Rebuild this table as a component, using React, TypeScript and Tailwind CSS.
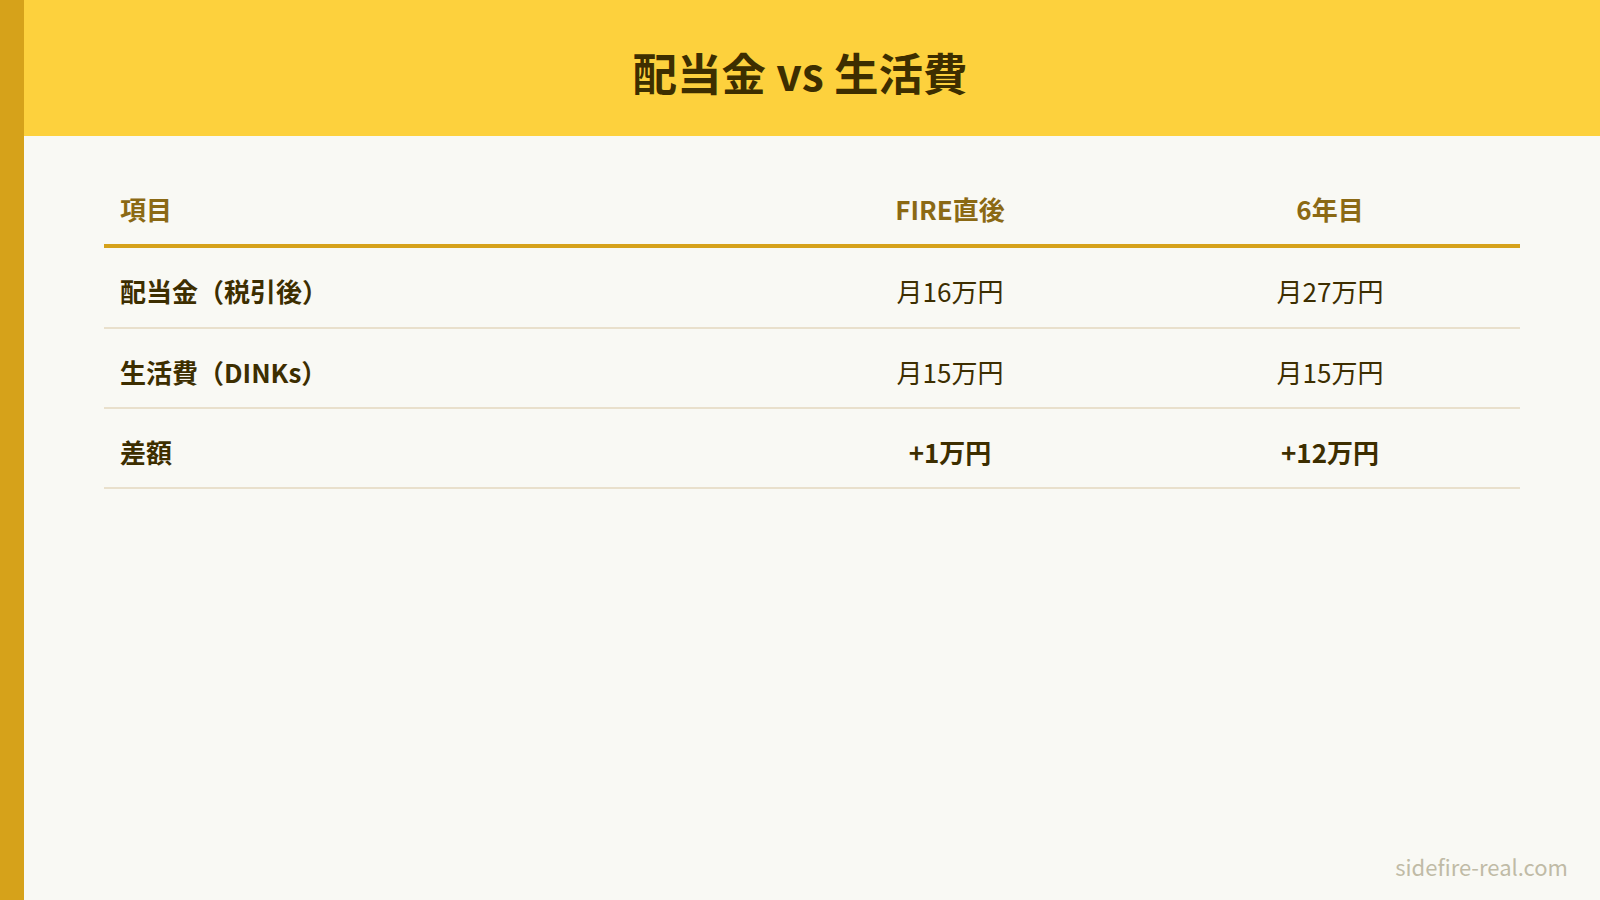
import React from "react";

const rows = [
  { label: "配当金（税引後）", a: "月16万円", b: "月27万円", bold: false, h: "h-[81px]" },
  { label: "生活費（DINKs）", a: "月15万円", b: "月15万円", bold: false, h: "h-[80px]" },
  { label: "差額", a: "+1万円", b: "+12万円", bold: true, h: "h-[80px]" },
];

export default function App() {
  return (
    <div
      className="flex h-[900px] w-[1600px] bg-[#f9f9f4]"
      style={{ fontFamily: '"Noto Sans CJK JP", "Noto Sans", sans-serif' }}
    >
      <div className="w-[24px] shrink-0 bg-[#d6a21a]" />
      <div className="flex flex-1 flex-col">
        <header className="flex h-[136px] shrink-0 items-center justify-center bg-[#fdd13d] pr-[24px] pt-[8px]">
          <h1 className="text-[44.5px] font-bold leading-none text-[#3d2e00]">配当金 vs 生活費</h1>
        </header>
        <main className="px-[80px] pt-[39px]">
          <div className="grid grid-cols-[656px_380px_380px] border-b-4 border-[#d6a21a] pb-[2px] text-[26px] font-bold text-[#8b6914]">
            <div className="flex h-[67px] items-center pl-[16px]">項目</div>
            <div className="flex h-[67px] items-center justify-center">FIRE直後</div>
            <div className="flex h-[67px] items-center justify-center">6年目</div>
          </div>
          {rows.map((r) => (
            <div
              key={r.label}
              className={`grid ${r.h} grid-cols-[656px_380px_380px] border-b-2 border-[#e9e0cc] pt-[6px] text-[26px] text-[#3d2e00]`}
            >
              <div className="flex items-center pl-[16px] font-bold">{r.label}</div>
              <div className={`flex items-center justify-center ${r.bold ? "font-bold" : "font-normal"}`}>{r.a}</div>
              <div className={`flex items-center justify-center ${r.bold ? "font-bold" : "font-normal"}`}>{r.b}</div>
            </div>
          ))}
        </main>
        <div className="flex-1" />
        <footer className="flex justify-end pb-[19px] pr-[32px] text-[22px] leading-[30px] text-[#c0bba6]">
          sidefire-real.com
        </footer>
      </div>
    </div>
  );
}
